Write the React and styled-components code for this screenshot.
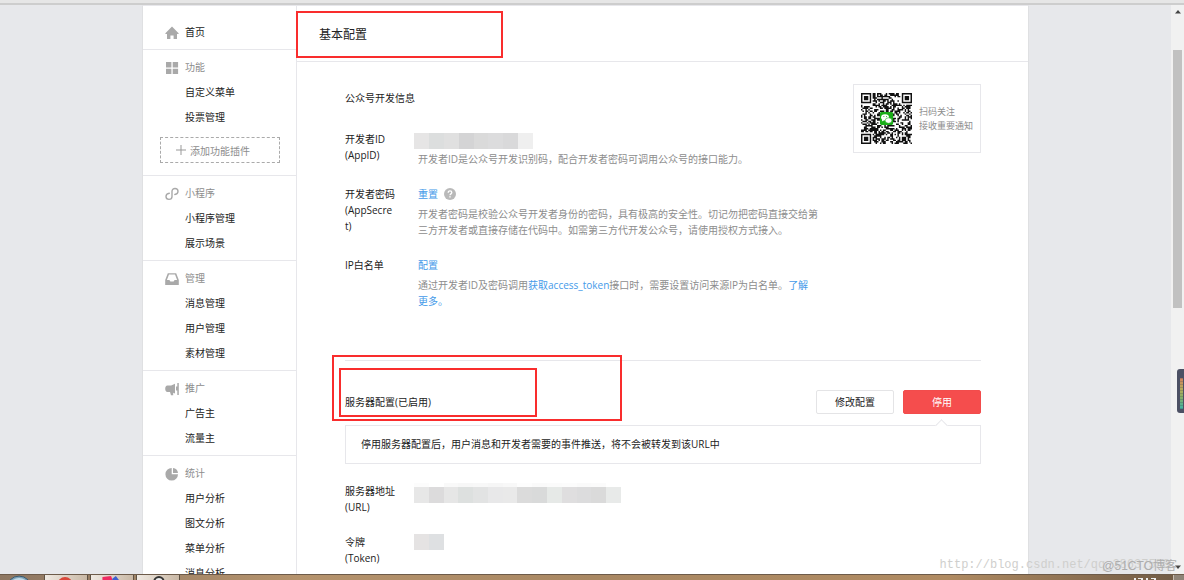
import React from 'react';
import styled, { createGlobalStyle } from 'styled-components';

const menuGroups = [
    { title: '功能', icon: 'grid', items: ['自定义菜单', '投票管理'], addable: true },
    { title: '小程序', icon: 'mini', items: ['小程序管理', '展示场景'] },
    { title: '管理', icon: 'inbox', items: ['消息管理', '用户管理', '素材管理'] },
    { title: '推广', icon: 'horn', items: ['广告主', '流量主'] },
    { title: '统计', icon: 'pie', items: ['用户分析', '图文分析', '菜单分析', '消息分析'] },
];

const appIdBlocks = ['#e6e5e5', '#dcdede', '#e0e0e0', '#d4d4d5', '#dadada', '#dcdcdd', '#d9d9da', '#efefef'];
const urlBlocks = ['#e7e7e7', '#dcdbdc', '#e6e6e6', '#dde0df', '#e2e3e3', '#e8e8e9', '#e9e9e9', '#dbdbdb', '#d9dada', '#e6e9e7', '#dfdedf', '#dcdcdd', '#dadada', '#e8eae9'];
const urlFaintBlocks = ['#fcfcfc', '#ffffff', '#f9f9f9', '#f7f7f7', '#f8f8f8', '#f6f6f6', '#f8f8f8', '#fdfdfd', '#fafafa', '#fbfbfb', '#fcfcfc', '#fafafa', '#fbfbfb', '#ffffff'];
const tokenBlocks = ['#e5e3e3', '#dee0e2'];

const MenuIcon = ({ name }) => (
    <IconSvg viewBox="0 0 14 14" aria-hidden="true">
        {name === 'home' && <path d="M7 .6 13.6 7.2V8H12v5H8.6V9.4H5.4V13H2V8H.4v-.8z" />}
        {name === 'grid' && <path d="M1 1h5.4v5.4H1zM7.7 1h5.4v5.4H7.7zM1 7.7h5.4v5.4H1zM7.7 7.7h5.4v5.4H7.7z" />}
        {name === 'mini' && (
            <path
                d="M4.3 6.3C2.5 6.5 1 7.8 1 9.6c0 1.6 1.3 2.8 3 2.8s3-1.2 3-2.9V4.3C7 2.7 8.3 1.5 10 1.5s3 1.2 3 2.8c0 1.7-1.4 3-3.2 3.2"
                fill="none"
                stroke="#a9a9a9"
                strokeWidth="1.4"
                strokeLinecap="round"
            />
        )}
        {name === 'inbox' && (
            <path d="M2.8 1.2h8.4L13.8 8v5H.2V8zM4 2.5 1.9 8h2.5l1 1.500h3.200l1-1.500h2.500L10 2.500z" fillRule="evenodd" />
        )}
        {name === 'horn' && (
            <path d="M10 1.8v9.6L8.2 10.8v2.5H6L5 10H2.4C1 10 .2 8.3.2 6.7s.8-3.1 2.2-3.1h3.8zM11 4.6h1.3V1h1.5v12h-1.5V8.6H11z" />
        )}
        {name === 'pie' && <path d="M6.7.9v6.3H13A6.3 6.3 0 1 1 6.7.9zM8 .9A5.8 5.8 0 0 1 13 6H8z" />}
    </IconSvg>
);

const QR_SIZE = 35;

const inFinder = (x, y) => {
    const far = QR_SIZE - 8;
    return (x < 8 && y < 8) || (x >= far && y < 8) || (x < 8 && y >= far);
};

const buildQrPath = () => {
    let seed = 20177;
    let d = '';
    for (let y = 0; y < QR_SIZE; y += 1) {
        for (let x = 0; x < QR_SIZE; x += 1) {
            seed = (seed * 1103515245 + 12345) % 2147483648;
            const inLogo = Math.abs(x - 17) < 5 && Math.abs(y - 17) < 5;
            if (!inFinder(x, y) && !inLogo && seed / 2147483648 < 0.53) {
                d += `M${x} ${y}h1v1h-1z`;
            }
        }
    }
    [[0, 0], [QR_SIZE - 7, 0], [0, QR_SIZE - 7]].forEach(([x, y]) => {
        d += `M${x} ${y}h7v7h-7zM${x + 1} ${y + 1}v5h5v-5zM${x + 2} ${y + 2}h3v3h-3z`;
    });
    return d;
};

const QrCode = () => (
    <QrSvg viewBox={`0 0 ${QR_SIZE} ${QR_SIZE}`} role="img" aria-label="二维码">
        <path d={buildQrPath()} fill="#111" />
        <rect x="13" y="13" width="9" height="9" rx="1" fill="#1aad19" />
        <ellipse cx="16.5" cy="16.7" rx="2.7" ry="2.2" fill="#fff" />
        <path d="M14.7 18l-.4 1.5 1.6-.8z" fill="#fff" />
        <ellipse cx="18.9" cy="18.9" rx="2.3" ry="1.9" fill="#fff" stroke="#1aad19" strokeWidth=".4" />
        <circle cx="15.7" cy="16.2" r=".35" fill="#1aad19" />
        <circle cx="17.5" cy="16.2" r=".35" fill="#1aad19" />
    </QrSvg>
);

const HelpIcon = () => (
    <HelpSvg viewBox="0 0 12 12" aria-hidden="true">
        <circle cx="6" cy="6" r="6" fill="#b9b9b9" />
        <path d="M4.2 4.8C4.2 3.6 5 2.9 6 2.9s1.8.7 1.8 1.7c0 1.3-1.8 1.3-1.8 2.7" fill="none" stroke="#fff" strokeWidth="1.3" />
        <rect x="5.3" y="8.2" width="1.4" height="1.3" fill="#fff" />
    </HelpSvg>
);

const Mosaic = ({ colors, size, faint }) => (
    <MosaicRow $size={size} $faint={faint}>
        {colors.map((color, i) => (
            <MosaicBlock key={i} $color={color} />
        ))}
    </MosaicRow>
);

const App = () => {
    return (
        <>
            <GlobalStyle />
            <Screen>
                <BrowserEdge />
                <Viewport>
                    <Page>
                        <Panel>
                            <Sidebar>
                                <MenuGroup $first>
                                    <MenuHome href="#home">
                                        <MenuIcon name="home" />
                                        首页
                                    </MenuHome>
                                </MenuGroup>
                                {menuGroups.map((group) => (
                                    <MenuGroup key={group.title}>
                                        <MenuTitle>
                                            <MenuIcon name={group.icon} />
                                            {group.title}
                                        </MenuTitle>
                                        {group.items.map((item) => (
                                            <MenuItem key={item} href="#menu">{item}</MenuItem>
                                        ))}
                                        {group.addable && (
                                            <AddButton type="button">
                                                <PlusSvg viewBox="0 0 10 10" aria-hidden="true">
                                                    <path d="M5 0v10M0 5h10" stroke="#999" strokeWidth="1" />
                                                </PlusSvg>
                                                添加功能插件
                                            </AddButton>
                                        )}
                                    </MenuGroup>
                                ))}
                            </Sidebar>
                            <Main>
                                <MainHeader>
                                    <PageTitle>基本配置</PageTitle>
                                    <TitleMark />
                                </MainHeader>
                                <MainBody>
                                    <InfoSection>
                                        <InfoContent>
                                            <InfoTitle>公众号开发信息</InfoTitle>
                                            <FieldList>
                                                <Field>
                                                    <FieldLabel>开发者ID<br />(AppID)</FieldLabel>
                                                    <FieldValue>
                                                        <ValueLine $center>
                                                            <Mosaic colors={appIdBlocks} size={119} />
                                                        </ValueLine>
                                                        <Description>开发者ID是公众号开发识别码，配合开发者密码可调用公众号的接口能力。</Description>
                                                    </FieldValue>
                                                </Field>
                                                <Field>
                                                    <FieldLabel>开发者密码<br />(AppSecret)</FieldLabel>
                                                    <FieldValue>
                                                        <ValueLine>
                                                            <TextLink href="#reset">重置</TextLink>
                                                            <HelpIcon />
                                                        </ValueLine>
                                                        <Description>开发者密码是校验公众号开发者身份的密码，具有极高的安全性。切记勿把密码直接交给第三方开发者或直接存储在代码中。如需第三方代开发公众号，请使用授权方式接入。</Description>
                                                    </FieldValue>
                                                </Field>
                                                <Field>
                                                    <FieldLabel>IP白名单</FieldLabel>
                                                    <FieldValue>
                                                        <ValueLine>
                                                            <TextLink href="#whitelist">配置</TextLink>
                                                        </ValueLine>
                                                        <Description>
                                                            通过开发者ID及密码调用
                                                            <TextLink href="#token">获取access_token</TextLink>
                                                            接口时，需要设置访问来源IP为白名单。
                                                            <TextLink href="#more">了解更多。</TextLink>
                                                        </Description>
                                                    </FieldValue>
                                                </Field>
                                            </FieldList>
                                        </InfoContent>
                                        <QrCard>
                                            <QrCode />
                                            <QrText>
                                                扫码关注
                                                <br />
                                                接收重要通知
                                            </QrText>
                                        </QrCard>
                                    </InfoSection>
                                    <ServerSection>
                                        <OuterMark />
                                        <InnerMark />
                                        <ServerHeader>
                                            <ServerTitle>服务器配置(已启用)</ServerTitle>
                                            <Actions>
                                                <ActionButton type="button">修改配置</ActionButton>
                                                <ActionButton type="button" $danger>停用</ActionButton>
                                            </Actions>
                                        </ServerHeader>
                                        <Notice>停用服务器配置后，用户消息和开发者需要的事件推送，将不会被转发到该URL中</Notice>
                                        <FieldList>
                                            <Field>
                                                <FieldLabel>服务器地址<br />(URL)</FieldLabel>
                                                <FieldValue>
                                                    <Mosaic colors={urlFaintBlocks} size={207} faint />
                                                    <Mosaic colors={urlBlocks} size={207} />
                                                </FieldValue>
                                            </Field>
                                            <Field>
                                                <FieldLabel>令牌<br />(Token)</FieldLabel>
                                                <FieldValue>
                                                    <Mosaic colors={tokenBlocks} size={30} />
                                                </FieldValue>
                                            </Field>
                                        </FieldList>
                                    </ServerSection>
                                </MainBody>
                            </Main>
                        </Panel>
                    </Page>
                    <ScrollTrack>
                        <ScrollArrow viewBox="0 0 6 4" aria-hidden="true">
                            <path d="M3 0l3 3.5H0z" />
                        </ScrollArrow>
                        <ScrollRail>
                            <ScrollThumb />
                        </ScrollRail>
                        <ScrollArrow viewBox="0 0 6 4" aria-hidden="true">
                            <path d="M0 .5h6L3 4z" />
                        </ScrollArrow>
                    </ScrollTrack>
                    <Gauge>
                        <GaugeBar />
                    </Gauge>
                    <BlogMark>http://blog.csdn.net/qq_38637558</BlogMark>
                    <SiteMark>@51CTO博客</SiteMark>
                </Viewport>
                <Taskbar>
                    <TaskIcon viewBox="0 0 44 6" aria-hidden="true">
                        <circle cx="20" cy="14" r="13" fill="#7fa3b8" stroke="#35566b" />
                        <path d="M12 6q8-6 16 0z" fill="#c5dbe6" />
                    </TaskIcon>
                    <TaskButton>
                        <TaskIcon viewBox="0 0 44 6" aria-hidden="true">
                            <circle cx="21" cy="10" r="8" fill="#d9483b" />
                        </TaskIcon>
                    </TaskButton>
                    <TaskButton>
                        <TaskIcon viewBox="0 0 44 6" aria-hidden="true">
                            <path d="M12 2l9-1 2 5H12z" fill="#ef2b62" />
                            <path d="M22 4l4-3 4 5h-7z" fill="#3d5fd0" />
                        </TaskIcon>
                    </TaskButton>
                    <TaskButton>
                        <TaskIcon viewBox="0 0 44 6" aria-hidden="true">
                            <circle cx="23" cy="7" r="5" fill="#eee" stroke="#333" strokeWidth="2" />
                        </TaskIcon>
                    </TaskButton>
                    <TaskTray>
                        <ClockSvg viewBox="0 0 24 2" aria-hidden="true">
                            <path d="M2 0v2M5 0h4v2M14 0v2M18 0h4v2" fill="none" stroke="#eee" strokeWidth="2" />
                        </ClockSvg>
                        <ShowDesktop />
                    </TaskTray>
                </Taskbar>
            </Screen>
        </>
    );
};

export default App;

const GlobalStyle = createGlobalStyle`
  body {
    margin: 0;
    color: #222;
    font-family: 'Open Sans', 'Noto Sans CJK SC', sans-serif;
    font-size: 10px;
    line-height: 16px;
  }

  a {
    text-decoration: none;
  }

  button {
    font-family: inherit;
    font-size: inherit;
    padding: 0;
    cursor: pointer;
  }
`;

const Screen = styled.div`
  display: flex;
  flex-direction: column;
  height: 100vh;
  overflow: hidden;
`;

const BrowserEdge = styled.div`
  flex: none;
  height: 3px;
  background-color: #e6e6e6;
  border-bottom: 2px solid #cdcdcd;
`;

const Viewport = styled.div`
  position: relative;
  display: flex;
  flex: 1;
  min-height: 0;
  background-color: #e7e8eb;
`;

const Page = styled.div`
  flex: 1;
  overflow: hidden;
`;

const Panel = styled.div`
  display: flex;
  width: 100%;
  max-width: 887px;
  min-height: 100%;
  margin: 0 auto;
  background-color: #ffffff;
  border: 1px solid #dfe0e2;
  border-top-color: #e7e7eb;
  border-bottom: none;
  box-sizing: border-box;
`;

// 左侧菜单
const Sidebar = styled.nav`
  flex: none;
  width: 153px;
  border-right: 1px solid #e7e7eb;
`;

const MenuGroup = styled.div`
  padding: ${({ $first }) => ($first ? '14px 0 4px' : '5px 0 4px')};
  border-top: ${({ $first }) => ($first ? 'none' : '1px solid #e7e7eb')};
`;

const MenuTitle = styled.div`
  display: flex;
  align-items: center;
  gap: 6px;
  padding-left: 22px;
  line-height: 25px;
  color: #8d8d8d;
`;

const MenuHome = styled.a`
  display: flex;
  align-items: center;
  gap: 6px;
  padding-left: 22px;
  line-height: 25px;
  color: #222;
`;

const MenuItem = styled.a`
  display: block;
  padding-left: 42px;
  line-height: 25px;
  color: #222;
`;

const IconSvg = styled.svg`
  width: 14px;
  height: 14px;
  fill: #a9a9a9;
`;

const AddButton = styled.button`
  display: flex;
  align-items: center;
  justify-content: center;
  gap: 4px;
  width: 120px;
  height: 26px;
  margin: 7px 17px 8px;
  padding: 0 14px 0 0;
  background-color: transparent;
  border: 1px dashed #aaa;
  color: #8d8d8d;
`;

const PlusSvg = styled.svg`
  width: 10px;
  height: 10px;
`;

// 右侧内容
const Main = styled.main`
  flex: 1;
  min-width: 0;
`;

const MainHeader = styled.header`
  position: relative;
  padding: 19px 22px 16px;
  border-bottom: 1px solid #e7e7eb;
`;

const PageTitle = styled.h2`
  margin: 0;
  font-size: 12px;
  font-weight: 400;
  line-height: 20px;
`;

const RedMark = styled.div`
  position: absolute;
  border: 2px solid #f92d2d;
  box-sizing: border-box;
  pointer-events: none;
`;

const TitleMark = styled(RedMark)`
  top: 5px;
  left: -1px;
  width: 207px;
  height: 47px;
`;

const OuterMark = styled(RedMark)`
  top: -6px;
  left: -13px;
  width: 290px;
  height: 66px;
`;

const InnerMark = styled(RedMark)`
  top: 7px;
  left: -6px;
  width: 198px;
  height: 49px;
`;

const MainBody = styled.div`
  padding: 22px 47px 22px 48px;
`;

const InfoSection = styled.section`
  display: flex;
  justify-content: space-between;
  align-items: flex-start;
  padding-bottom: 51px;
`;

const InfoContent = styled.div`
  min-width: 0;
`;

const InfoTitle = styled.h3`
  margin: 0;
  font-size: 10px;
  font-weight: 400;
  line-height: 28px;
`;

const FieldList = styled.dl`
  display: flex;
  flex-direction: column;
  gap: 19px;
  margin: 19px 0 0;
`;

const Field = styled.div`
  display: flex;
  gap: 23px;
`;

const FieldLabel = styled.dt`
  flex: none;
  width: 50px;
  word-break: break-all;
`;

const FieldValue = styled.dd`
  flex: 1;
  max-width: 400px;
  margin: 0;
`;

const ValueLine = styled.div`
  display: flex;
  align-items: ${({ $center }) => ($center ? 'center' : 'flex-start')};
  gap: 6px;
  height: 20px;
`;

const TextLink = styled.a`
  color: #459ae9;
`;

const HelpSvg = styled.svg`
  width: 12px;
  height: 12px;
  margin-top: 2px;
`;

const Description = styled.p`
  margin: 0;
  color: #8d8d8d;
`;

// 打码区域
const MosaicRow = styled.div`
  display: flex;
  width: ${({ $size }) => $size}px;
  height: ${({ $faint }) => ($faint ? 4 : 16)}px;
  margin-left: -4px;
`;

const MosaicBlock = styled.span`
  flex: 1;
  background-color: ${({ $color }) => $color};
`;

const QrCard = styled.aside`
  display: flex;
  align-items: center;
  gap: 7px;
  padding: 8px 7px;
  border: 1px solid #e7e7eb;
`;

const QrSvg = styled.svg`
  width: 51px;
  height: 51px;
`;

const QrText = styled.p`
  margin: 0;
  font-size: 9px;
  line-height: 14px;
  white-space: nowrap;
  color: #8d8d8d;
`;

// 服务器配置
const ServerSection = styled.section`
  position: relative;
  border-top: 1px solid #e7e7eb;
  padding-top: 29px;
`;

const ServerHeader = styled.div`
  display: flex;
  justify-content: space-between;
  align-items: center;
`;

const ServerTitle = styled.h3`
  margin: 0;
  font-size: 10px;
  font-weight: 400;
`;

const Actions = styled.div`
  display: flex;
  gap: 9px;
`;

const ActionButton = styled.button`
  width: 78px;
  height: 24px;
  padding-bottom: 2px;
  border: 1px solid ${({ $danger }) => ($danger ? '#f24c4c' : '#e4e4e6')};
  border-radius: 2px;
  background-color: ${({ $danger }) => ($danger ? '#f54d4d' : '#ffffff')};
  color: ${({ $danger }) => ($danger ? '#ffffff' : '#222')};
`;

const Notice = styled.div`
  position: relative;
  margin-top: 11px;
  padding: 10px 15px 11px;
  border: 1px solid #e7e7eb;

  &::before {
    content: '';
    position: absolute;
    top: -5px;
    right: 34px;
    width: 8px;
    height: 8px;
    background-color: #ffffff;
    border-top: 1px solid #e7e7eb;
    border-left: 1px solid #e7e7eb;
    transform: rotate(45deg);
  }
`;

// 滚动条
const ScrollTrack = styled.div`
  display: flex;
  flex-direction: column;
  align-items: center;
  flex: none;
  width: 13px;
  padding: 5px 0;
  box-sizing: border-box;
  background-color: #f1f1f1;
`;

const ScrollArrow = styled.svg`
  width: 6px;
  height: 4px;
  fill: #444;
`;

const ScrollRail = styled.div`
  flex: 1;
  padding-top: 36px;
`;

const ScrollThumb = styled.div`
  width: 9px;
  height: 50%;
  background-color: #c1c1c1;
`;

const Gauge = styled.div`
  position: absolute;
  top: 364px;
  right: 0;
  width: 7px;
  height: 44px;
  padding: 9px 1px 4px 3px;
  box-sizing: border-box;
  border-radius: 3px 0 0 3px;
  background-color: #4c5064;
`;

const GaugeBar = styled.div`
  height: 100%;
  background: repeating-linear-gradient(rgba(60, 64, 80, 0.25) 0 1px, transparent 1px 3px),
    linear-gradient(#d0805f, #b9ab5a 35%, #8aae65 60%, #3fb3a3);
`;

const BlogMark = styled.span`
  position: absolute;
  right: 14px;
  bottom: 1px;
  font-family: 'Liberation Mono', monospace;
  font-size: 12px;
  color: #cfcfcd;
`;

const SiteMark = styled.span`
  position: absolute;
  right: 7px;
  bottom: 0;
  font-family: 'Liberation Sans', 'Noto Sans CJK SC', sans-serif;
  font-size: 12px;
  color: #adadad;
`;

// 任务栏
const Taskbar = styled.footer`
  display: flex;
  gap: 2px;
  flex: none;
  height: 5px;
  overflow: hidden;
  border-top: 1px solid #6d5b4a;
  background: linear-gradient(90deg, #8e7762, #b5936d 25%, #a98863 50%, #b08b62 80%, #6f5a45);
`;

const TaskButton = styled.div`
  width: 44px;
  border: 1px solid #5f5244;
  border-top: none;
  border-bottom: none;
  box-sizing: border-box;
  background: linear-gradient(90deg, #efe9e2, #c9b8a5);
`;

const TaskIcon = styled.svg`
  display: block;
  width: 42px;
  height: 6px;
`;

const TaskTray = styled.div`
  display: flex;
  align-items: flex-end;
  gap: 16px;
  margin-left: auto;
`;

const ClockSvg = styled.svg`
  width: 24px;
  height: 2px;
`;

const ShowDesktop = styled.div`
  width: 10px;
  height: 5px;
  background-color: #8f8478;
  border-left: 1px solid #c9bfb3;
`;
